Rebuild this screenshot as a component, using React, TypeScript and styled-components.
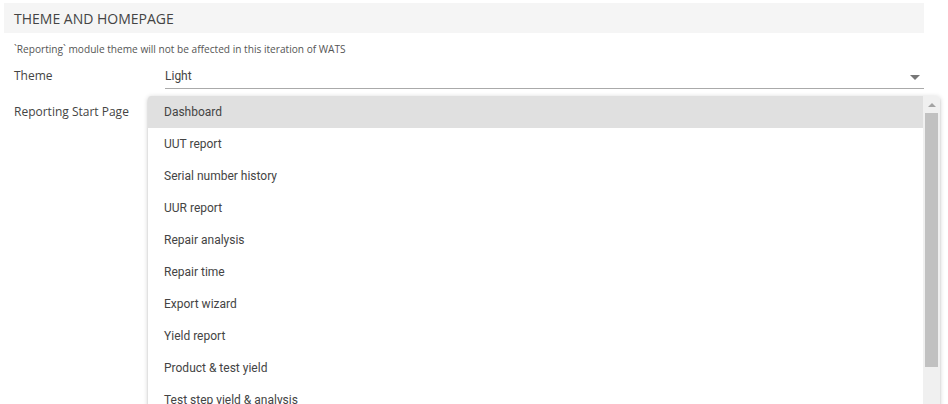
import React from "react";
import styled, { createGlobalStyle } from "styled-components";

const Global = createGlobalStyle`
  html, body { margin: 0; padding: 0; background: #fff; }
  body { font-family: "Open Sans", sans-serif; color: #333; }
`;

const Page = styled.div`
  position: relative;
  padding: 3px 24px 0 4px;
  height: 404px;
  box-sizing: border-box;
  overflow: hidden;
`;

const SectionHeader = styled.div`
  background: #f5f5f5;
  height: 30px;
  display: flex;
  align-items: center;
  padding-left: 10px;
  font-size: 14px;
  color: #444;
`;

const Note = styled.div`
  font-size: 10.15px;
  color: #555;
  padding: 9px 0 0 10px;
  line-height: 14px;
`;

const FieldRow = styled.div<{ $top: number }>`
  display: grid;
  grid-template-columns: 151px 1fr;
  align-items: end;
  padding-left: 10px;
  margin-top: ${(p) => p.$top}px;
`;

const Label = styled.div`
  font-size: 12px;
  color: #444;
  line-height: 18px;
  padding-bottom: 4px;
`;

const Select = styled.div`
  display: flex;
  align-items: center;
  justify-content: space-between;
  height: 24px;
  border-bottom: 1px solid #aaa;
  font-family: Roboto, sans-serif;
  font-size: 12px;
  color: #444;
`;

const Arrow = styled.span`
  width: 0;
  height: 0;
  border-left: 5px solid transparent;
  border-right: 5px solid transparent;
  border-top: 5px solid #777;
  margin-right: 4px;
  margin-top: 2px;
`;

const Menu = styled.div`
  position: absolute;
  left: 148px;
  top: 96px;
  width: 792px;
  height: 330px;
  background: #fff;
  display: flex;
  border-radius: 3px 3px 0 0;
  box-shadow: 0 1px 5px rgba(0, 0, 0, 0.2), 0 2px 2px rgba(0, 0, 0, 0.12);
  overflow: hidden;
`;

const List = styled.div`
  flex: 1;
  display: flex;
  flex-direction: column;
`;

const Item = styled.div<{ $active?: boolean }>`
  height: 32px;
  flex: none;
  display: flex;
  align-items: center;
  padding-left: 16px;
  font-family: Roboto, sans-serif;
  font-size: 12px;
  color: #444;
  background: ${(p) => (p.$active ? "#e0e0e0" : "#fff")};
`;

const ScrollTrack = styled.div`
  width: 17px;
  background: #f0f0f0;
  display: flex;
  flex-direction: column;
  align-items: center;
`;

const ScrollButton = styled.div`
  height: 17px;
  width: 100%;
  display: flex;
  align-items: center;
  justify-content: center;
`;

const UpArrow = styled.span`
  width: 0;
  height: 0;
  border-left: 4px solid transparent;
  border-right: 4px solid transparent;
  border-bottom: 4px solid #a3a3a3;
`;

const Thumb = styled.div`
  width: 13px;
  height: 254px;
  background: #c1c1c1;
`;

const items = [
  "Dashboard",
  "UUT report",
  "Serial number history",
  "UUR report",
  "Repair analysis",
  "Repair time",
  "Export wizard",
  "Yield report",
  "Product & test yield",
  "Test step yield & analysis",
  "Measurement analysis",
];

export default function App() {
  return (
    <Page>
      <Global />
      <SectionHeader>THEME AND HOMEPAGE</SectionHeader>
      <Note>`Reporting` module theme will not be affected in this iteration of WATS</Note>
      <FieldRow $top={8}>
        <Label>Theme</Label>
        <Select>
          <span>Light</span>
          <Arrow />
        </Select>
      </FieldRow>
      <FieldRow $top={14}>
        <Label>Reporting Start Page</Label>
        <div />
      </FieldRow>
      <Menu>
        <List>
          {items.map((it, i) => (
            <Item key={it} $active={i === 0}>
              {it}
            </Item>
          ))}
        </List>
        <ScrollTrack>
          <ScrollButton>
            <UpArrow />
          </ScrollButton>
          <Thumb />
        </ScrollTrack>
      </Menu>
    </Page>
  );
}
